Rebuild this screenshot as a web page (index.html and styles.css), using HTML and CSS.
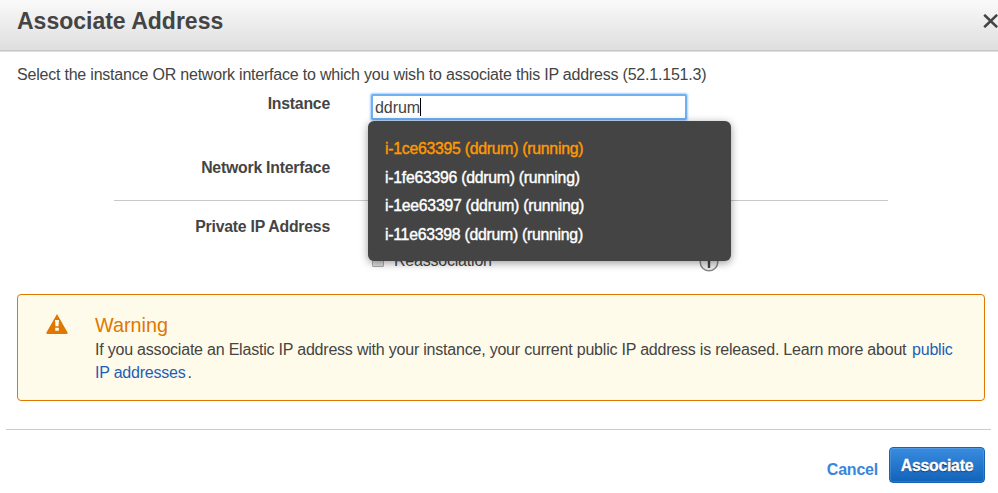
FILE: index.html
```html
<!DOCTYPE html>
<html lang="en">
<head>
<meta charset="utf-8">
<title>Associate Address</title>
<link rel="stylesheet" href="styles.css">
</head>
<body>
<main class="dialog">
  <header class="dialog-header">
    <h1>Associate Address</h1>
    <svg class="close" viewBox="0 0 16 14" aria-label="Close"><path d="M1.2 0.8 L14.2 13.2 M14.2 0.8 L1.2 13.2"/></svg>
  </header>
  <section class="dialog-body">
    <p class="intro">Select the instance OR network interface to which you wish to associate this IP address (52.1.151.3)</p>
    <div class="row row-instance">
      <label>Instance</label>
      <div class="combo">
        <div class="field"><span>ddrum</span><i class="caret"></i></div>
        <ul class="menu">
          <li class="active">i-1ce63395 (ddrum) (running)</li>
          <li>i-1fe63396 (ddrum) (running)</li>
          <li>i-1ee63397 (ddrum) (running)</li>
          <li>i-11e63398 (ddrum) (running)</li>
        </ul>
      </div>
    </div>
    <div class="row row-network"><label>Network Interface</label></div>
    <hr class="divider">
    <div class="row row-private"><label>Private IP Address</label></div>
    <div class="row-reassoc">
      <i class="checkbox"></i><span>Reassociation</span>
      <svg class="info" viewBox="0 0 20 20"><circle cx="10" cy="10" r="8.8"/><path d="M10 6.5v9.5M10 3v2"/></svg>
    </div>
    <section class="warning">
      <svg class="warning-icon" viewBox="0 0 22 20"><path class="tri" d="M11 0 21.4 18.2Q22 20 20.6 20H1.4Q0 20 .6 18.2Z"/><path class="mark" d="M9 6h4l-.5 6.3H9.5ZM9.2 13.8h3.6v3H9.2Z"/></svg>
      <div class="warning-text">
        <h2>Warning</h2>
        <p>If you associate an Elastic IP address with your instance, your current public IP address is released. Learn more about <a>public<br>IP addresses</a><span class="stop">.</span></p>
      </div>
    </section>
  </section>
  <footer class="dialog-footer">
    <a class="cancel">Cancel</a>
    <button class="primary">Associate</button>
  </footer>
</main>
</body>
</html>
```
FILE: styles.css
```css
* { box-sizing: border-box; }
body {
  margin: 0;
  background: #fff;
  color: #444;
  font: 16px/23px "Liberation Sans", Arial, sans-serif;
  letter-spacing: -.21px;
  overflow: hidden;
}
h1, h2, p, ul { margin: 0; padding: 0; }
.dialog { width: 998px; height: 493px; display: flex; flex-direction: column; }
.dialog-header {
  height: 52px;
  flex: none;
  display: flex;
  justify-content: space-between;
  background: linear-gradient(#fafafa, #dedede 50px, #c8c8c8 50px, #c8c8c8 51px, #dedede 51px);
}
h1 { margin: 7px 0 0 17px; font-size: 23px; line-height: 28px; font-weight: bold; letter-spacing: 0; }
.close { width: 16px; height: 14px; margin: 14px -1px 0 0; fill: none; stroke: #444; stroke-width: 2.6; }
.dialog-body { padding: 11px 13px 0 17px; flex: none; height: 377px; }
.intro { white-space: nowrap; }
.row { display: flex; align-items: flex-start; }
.row label { width: 313px; text-align: right; font-weight: bold; letter-spacing: -.22px; font-size: 15.8px; }
.row-instance { height: 64px; padding-top: 6px; }
.combo { position: relative; margin-left: 41px; margin-top: 2px; }
.field {
  width: 316px;
  height: 26px;
  padding: 1px 0 0 2px;
  border: 2px solid #70b0f5;
  box-shadow: 0 0 2px 1px #a9d0fa;
  border-radius: 2px;
  background: #fff;
  display: flex;
  line-height: 21px;
  letter-spacing: -.05px;
}
.caret { width: 1px; height: 18px; margin-top: 1px; background: #000; }
.menu {
  position: absolute;
  left: -3px;
  top: 27px;
  width: 363px;
  height: 140px;
  padding: 14px 17px 12px;
  list-style: none;
  border-radius: 6px;
  background: #444;
  box-shadow: 0 2px 9px rgba(0, 0, 0, .4);
  color: #fff;
  font-size: 15.8px;
  line-height: 28.6px;
  letter-spacing: -.26px;
  -webkit-text-stroke: .4px currentColor;
}
.menu .active { color: #ff9900; }
.row-network { height: 50px; padding-top: 6px; }
.divider { width: 774px; margin: 0 0 0 97px; border: 0; border-top: 1px solid #c8c8c8; }
.row-private { height: 42px; padding-top: 14px; }
.row-reassoc { height: 51px; padding: 6px 0 0 355px; display: flex; align-items: flex-start; }
.row-reassoc span { width: 305px; margin-left: 10px; }
.checkbox { width: 12px; height: 12px; margin-top: 6px; border: 1px solid #aaa; border-radius: 1px; background: #ddd; }
.info { width: 20px; height: 20px; margin-top: 3px; fill: #eee; stroke: #888; stroke-width: 1.5; }
.info path { stroke: #444; stroke-width: 2.4; }
.warning {
  width: 968px;
  height: 107px;
  display: flex;
  align-items: flex-start;
  padding: 19px 0 0 28px;
  border: 1px solid #e07700;
  border-radius: 4px;
  background: #fffbea;
}
.warning-icon { width: 22px; height: 20px; flex: none; }
.tri { fill: #e07700; }
.mark { fill: #fffbea; }
.warning-text { margin-left: 27px; margin-top: -1px; white-space: nowrap; }
h2 { color: #e07700; font-size: 19.8px; line-height: 24px; font-weight: normal; letter-spacing: 0; }
.warning p { margin-top: 1px; }
.warning a { color: #1b60b8; margin-left: 1.5px; }
.stop { margin-left: 2px; }
.dialog-footer {
  height: 64px;
  margin: 0 7px 0 6px;
  padding: 17px 6px 0 0;
  border-top: 1px solid #ccc;
  display: flex;
  justify-content: flex-end;
}
.cancel { margin: 11px 11px 0 0; color: #3a86dc; font-weight: bold; }
.primary {
  width: 96px;
  height: 36px;
  padding: 1px 0 0;
  border: 1px solid #1464b4;
  border-radius: 4px;
  background: linear-gradient(#3a8ce0, #1163b9);
  box-shadow: inset 0 0 0 1px rgba(255, 255, 255, .12);
  color: #fff;
  font: bold 15.8px "Liberation Sans", Arial, sans-serif;
  letter-spacing: -.25px;
  text-shadow: 0 1px 1px rgba(0, 0, 0, .6);
  -webkit-text-stroke: .3px #fff;
}
```
